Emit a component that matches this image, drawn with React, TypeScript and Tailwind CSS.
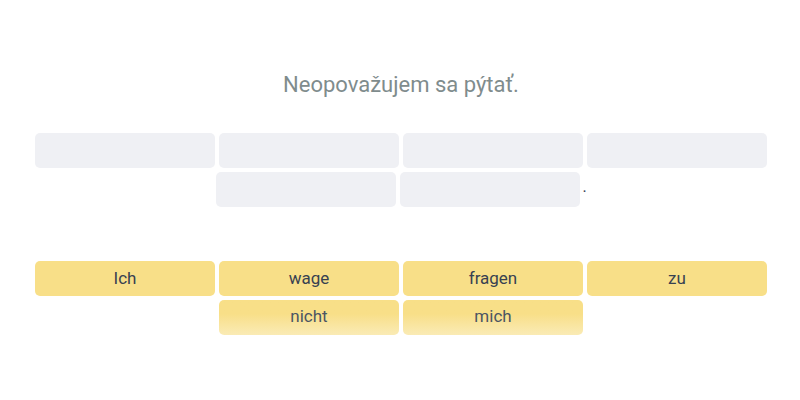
const slots = [0, 1, 2, 3];
const slots2 = [0, 1];
const words = ['Ich', 'wage', 'fragen', 'zu'];
const words2 = ['nicht', 'mich'];

export default function App() {
  return (
    <div className="h-[400px] w-[800px] bg-white flex flex-col items-center pl-[2px] font-['Roboto',sans-serif]">
      <h1 className="mt-[72px] h-[26px] leading-[26px] text-[22px] text-[#7f8c8d]">Neopovažujem sa pýtať.</h1>

      <div className="mt-[35px] flex flex-col items-center gap-1">
        <div className="flex gap-1">
          {slots.map((i) => (
            <div key={i} className="w-[180px] h-[35px] rounded-[5px] bg-[#eff0f4]" />
          ))}
        </div>
        <div className="flex items-start gap-1 pl-[1px]">
          {slots2.map((i) => (
            <div key={i} className="w-[180px] h-[35px] rounded-[5px] bg-[#eff0f4]" />
          ))}
          <span className="-ml-[2px] mt-[7px] text-[16px] leading-[16px] text-[#374151]">.</span>
        </div>
      </div>

      <div className="mt-[54px] flex flex-col items-center gap-1 text-[17px] text-[#374151]">
        <div className="flex gap-1">
          {words.map((w) => (
            <div key={w} className="w-[180px] h-[35px] rounded-[5px] bg-[#f8df88] flex items-center justify-center">
              {w}
            </div>
          ))}
        </div>
        <div className="flex gap-1">
          {words2.map((w) => (
            <div
              key={w}
              className="w-[180px] h-[35px] rounded-[5px] bg-gradient-to-b from-[#f8df88] from-40% to-[#faebb5] flex items-center justify-center pb-[2px] text-[#4b5563]"
            >
              {w}
            </div>
          ))}
        </div>
      </div>
    </div>
  );
}
